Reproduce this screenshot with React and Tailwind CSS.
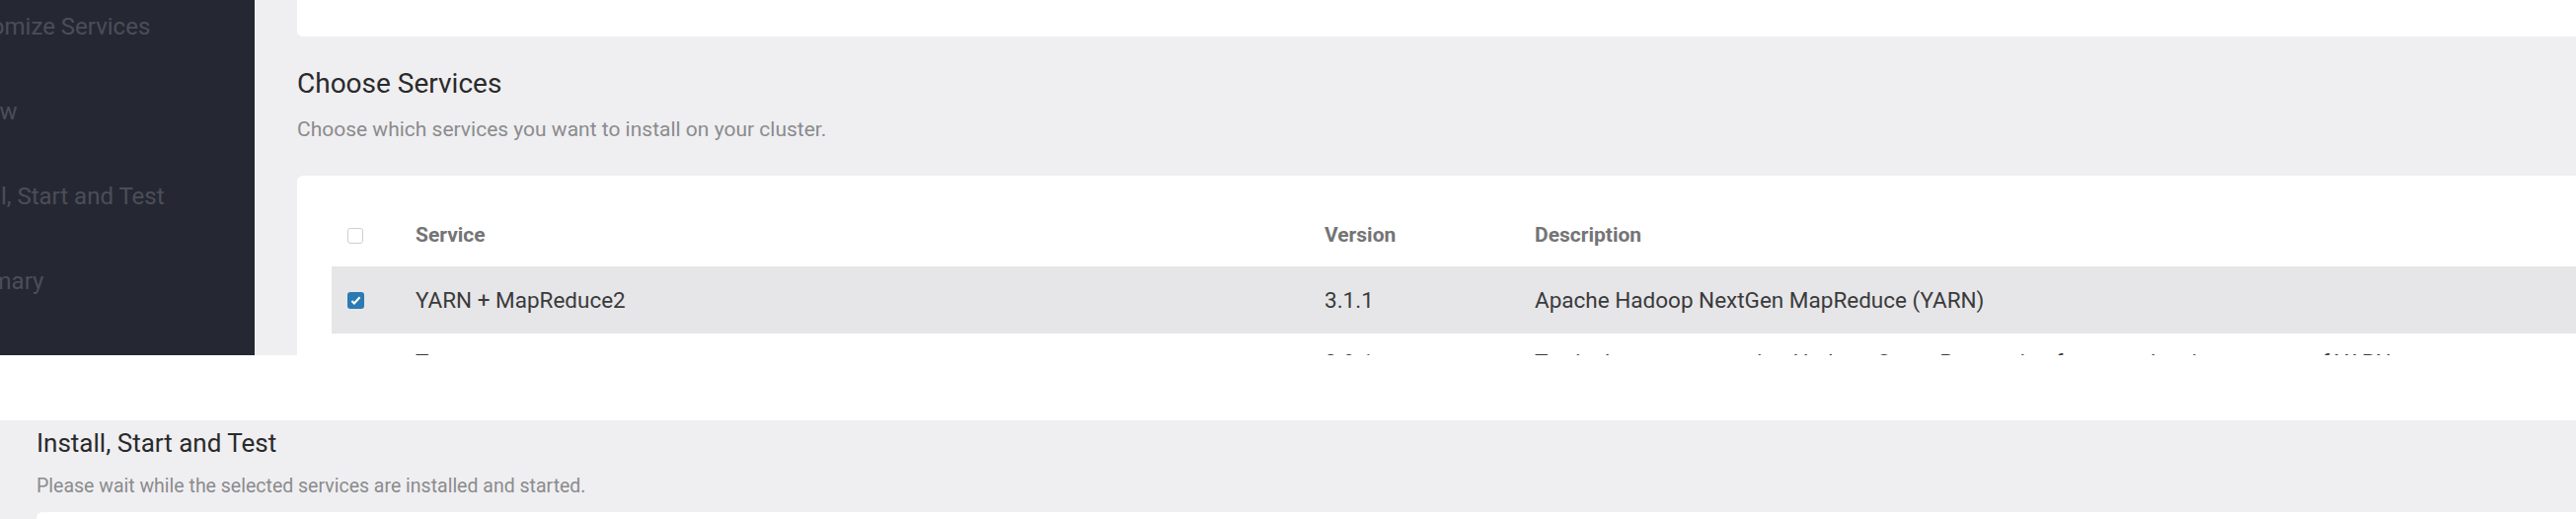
import React from "react";

const steps = ["Customize Services", "Review", "Install, Start and Test", "Summary"];

const services = [
  {
    name: "YARN + MapReduce2",
    version: "3.1.1",
    description: "Apache Hadoop NextGen MapReduce (YARN)",
    checked: true,
  },
  {
    name: "Tez",
    version: "0.9.1",
    description: "Tez is the next generation Hadoop Query Processing framework written on top of YARN.",
    checked: true,
  },
];

const CheckBox = ({ checked }) =>
  checked ? (
    <span className="flex h-[17px] w-[17px] items-center justify-center rounded-[3px] bg-[#2b7ab3]">
      <svg viewBox="0 0 16 16" className="h-[13px] w-[13px]">
        <path d="M3 8.5l3 3.2L13 4" fill="none" stroke="#fff" strokeWidth="2.6" />
      </svg>
    </span>
  ) : (
    <span className="block h-4 w-4 rounded-[3px] border border-[#cfcfd2] bg-white" />
  );

const Row = ({ children, className }) => (
  <div className={`grid grid-cols-[85px_921px_213px_1fr] ${className}`}>{children}</div>
);

export default function App() {
  return (
    <div className="flex h-[526px] w-[2610px] flex-col overflow-hidden bg-white font-['Roboto',sans-serif]">
      {/* first screenshot: choose services */}
      <div className="flex h-[360px] shrink-0 overflow-hidden">
        <aside className="flex w-[258px] shrink-0 flex-col gap-[62px] overflow-hidden bg-[#252833] pt-[15px]">
          {steps.map((s) => (
            <div key={s} className="-ml-[58px] whitespace-nowrap text-[24px] leading-[24px] text-[#4b4e59]">
              {s}
            </div>
          ))}
        </aside>

        <main className="flex-1 overflow-hidden bg-[#efeff1] pl-[43px]">
          <div className="h-[37px] rounded-bl-md bg-white" />
          <h2 className="mt-[32px] text-[28px] leading-[32px] text-[#2a2a2a]">Choose Services</h2>
          <p className="mt-[18px] text-[21px] leading-[24px] text-[#8b8b8d]">
            Choose which services you want to install on your cluster.
          </p>

          <div className="mt-[35px] rounded-tl-md bg-white pl-[35px] pt-[30px]">
            <Row className="h-[62px] items-center text-[21px] font-bold text-[#747476]">
              <div className="pl-[16px]">
                <CheckBox checked={false} />
              </div>
              <div>Service</div>
              <div>Version</div>
              <div>Description</div>
            </Row>
            {services.map((svc, i) => (
              <Row
                key={svc.name}
                className={
                  i === 0
                    ? "h-[68px] items-center bg-[#e6e6e8] text-[22.5px] leading-[24px] text-[#3a3a3c]"
                    : "h-[68px] items-start pt-[17px] text-[22.5px] leading-[24px] text-[#3a3a3c]"
                }
              >
                <div className={i === 0 ? "pl-[16px]" : "pl-[16px] pt-[6px]"}>
                  <CheckBox checked={svc.checked} />
                </div>
                <div>{svc.name}</div>
                <div>{svc.version}</div>
                <div className="whitespace-nowrap">{svc.description}</div>
              </Row>
            ))}
          </div>
        </main>
      </div>

      <div className="h-[66px] shrink-0 bg-white" />

      {/* second screenshot: install, start and test */}
      <section className="flex-1 overflow-hidden bg-[#efeff1] pl-[37px] pt-[8px]">
        <h2 className="text-[26px] leading-[30px] text-[#2a2a2a]">Install, Start and Test</h2>
        <p className="mt-[18px] text-[19.5px] leading-[22px] text-[#8b8b8d]">
          Please wait while the selected services are installed and started.
        </p>
        <div className="mt-[15px] h-[40px] rounded-tl-md bg-white" />
      </section>
    </div>
  );
}
